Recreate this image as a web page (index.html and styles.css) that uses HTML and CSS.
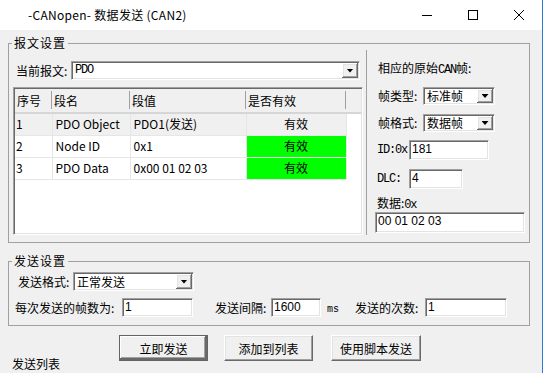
FILE: index.html
```html
<!DOCTYPE html>
<html lang="zh-CN">
<head>
    <meta charset="UTF-8">
    <title>-CANopen- 数据发送 (CAN2)</title>
    <link rel="stylesheet" href="styles.css">
</head>
<body>
    <div class="window">
        <div class="titlebar">
            <span class="title">-CANopen- 数据发送 (CAN2)</span>
            <div class="caption-btns">
                <span class="cap-btn">
                    <svg width="10" height="10" viewBox="0 0 10 10"><path d="M0 5.5H10" stroke="#000" stroke-width="1"/></svg>
                </span>
                <span class="cap-btn">
                    <svg width="10" height="10" viewBox="0 0 10 10"><rect x="0.5" y="0.5" width="9" height="9" fill="none" stroke="#000" stroke-width="1"/></svg>
                </span>
                <span class="cap-btn">
                    <svg width="10" height="10" viewBox="0 0 10 10"><path d="M0 0L10 10M10 0L0 10" stroke="#000" stroke-width="1"/></svg>
                </span>
            </div>
        </div>

        <!-- 报文设置 -->
        <fieldset class="group group-msg">
            <legend>报文设置</legend>
            <div class="msg-body">
                <div class="msg-left">
                    <div class="field-row">
                        <label class="lbl lbl-cur">当前报文:</label>
                        <div class="combo combo-cur">
                            <span class="combo-text mono">PDO</span>
                            <span class="combo-btn"><i class="arrow"></i></span>
                        </div>
                    </div>
                    <div class="listview">
                        <table class="grid">
                            <thead>
                                <tr>
                                    <th class="c-no">序号</th>
                                    <th class="c-name">段名</th>
                                    <th class="c-val">段值</th>
                                    <th class="c-ok">是否有效</th>
                                    <th class="c-fill"></th>
                                </tr>
                            </thead>
                            <tbody>
                                <tr class="row-sel">
                                    <td>1</td>
                                    <td>PDO Object</td>
                                    <td>PDO1(发送)</td>
                                    <td class="ok">有效</td>
                                    <td class="fill"></td>
                                </tr>
                                <tr>
                                    <td>2</td>
                                    <td>Node ID</td>
                                    <td>0x1</td>
                                    <td class="ok ok-on">有效</td>
                                    <td class="fill"></td>
                                </tr>
                                <tr>
                                    <td>3</td>
                                    <td>PDO Data</td>
                                    <td>0x00 01 02 03</td>
                                    <td class="ok ok-on">有效</td>
                                    <td class="fill"></td>
                                </tr>
                            </tbody>
                        </table>
                    </div>
                </div>

                <div class="msg-right">
                    <div class="raw-title">相应的原始<span class="mono">CAN</span>帧:</div>
                    <div class="field-row row-type">
                        <label class="lbl lbl-frame">帧类型:</label>
                        <div class="combo combo-frame">
                            <span class="combo-text">标准帧</span>
                            <span class="combo-btn"><i class="arrow"></i></span>
                        </div>
                    </div>
                    <div class="field-row row-fmt">
                        <label class="lbl lbl-frame">帧格式:</label>
                        <div class="combo combo-frame">
                            <span class="combo-text">数据帧</span>
                            <span class="combo-btn"><i class="arrow"></i></span>
                        </div>
                    </div>
                    <div class="field-row row-id">
                        <label class="lbl lbl-id mono">ID:0x</label>
                        <div class="edit edit-id">181</div>
                    </div>
                    <div class="field-row row-dlc">
                        <label class="lbl lbl-id mono">DLC:</label>
                        <div class="edit edit-dlc">4</div>
                    </div>
                    <div class="data-label">数据:<span class="mono">0x</span></div>
                    <div class="edit edit-data">00 01 02 03</div>
                </div>
            </div>
        </fieldset>

        <!-- 发送设置 -->
        <fieldset class="group group-send">
            <legend>发送设置</legend>
            <div class="send-body">
                <div class="field-row">
                    <label class="lbl lbl-mode">发送格式:</label>
                    <div class="combo combo-mode">
                        <span class="combo-text">正常发送</span>
                        <span class="combo-btn"><i class="arrow"></i></span>
                    </div>
                </div>
                <div class="field-row row-count">
                    <label class="lbl lbl-frames">每次发送的帧数为:</label>
                    <div class="edit edit-frames">1</div>
                    <label class="lbl lbl-gap">发送间隔:</label>
                    <div class="edit edit-gap">1600</div>
                    <span class="unit">ms</span>
                    <label class="lbl lbl-times">发送的次数:</label>
                    <div class="edit edit-times">1</div>
                </div>
            </div>
        </fieldset>

        <div class="actions">
            <button class="btn btn-default">立即发送</button>
            <button class="btn btn-add">添加到列表</button>
            <button class="btn btn-script">使用脚本发送</button>
        </div>

        <div class="list-title">发送列表</div>
    </div>
</body>
</html>
```

FILE: styles.css
```css
* {
    margin: 0;
    padding: 0;
    box-sizing: border-box;
}

body {
    width: 543px;
    height: 373px;
    overflow: hidden;
    background: #f0f0f0;
    font-family: "Noto Sans CJK SC", sans-serif;
    font-size: 12px;
    line-height: 14px;
    color: #000;
}

.mono {
    font-family: "Liberation Mono", monospace;
    font-size: 12px;
    letter-spacing: -1.2px;
}

.window {
    height: 373px;
    border-right: 1px solid #2b7bd3;
}

/* 标题栏 */
.titlebar {
    height: 30px;
    background: #fff;
    display: flex;
    align-items: center;
}

.title {
    flex: 1;
    padding-left: 28px;
    letter-spacing: 0.3px;
}

.caption-btns {
    display: flex;
    align-self: stretch;
}

.cap-btn {
    width: 46px;
    display: flex;
    align-items: center;
    justify-content: center;
}

/* 分组框 */
.group {
    margin-left: 8px;
    width: 522px;
    min-width: 0;
    border: 1px solid #a0a0a0;
    padding: 0;
}

.group legend {
    margin-left: 3px;
    padding: 0 2px;
    letter-spacing: 1px;
    line-height: 14px;
}

.group-msg {
    margin-top: 6px;
}

.msg-body {
    display: flex;
    padding: 0 0 7px 4px;
}

.msg-left {
    width: 350px;
    padding-top: 11px;
}

.msg-right {
    width: 163px;
    margin-left: 3px;
    border-left: 1px solid #a0a0a0;
    padding: 11px 0 0 11px;
}

.field-row {
    display: flex;
    align-items: center;
}

.lbl {
    flex: none;
    white-space: nowrap;
}

.lbl-cur {
    width: 55px;
    margin-left: 3px;
}

/* 下拉框 */
.combo {
    display: flex;
    height: 19px;
    padding: 1px;
    background: #fff;
    border: 1px solid;
    border-color: #a0a0a0 #fff #fff #a0a0a0;
    box-shadow: inset 1px 1px #696969, inset -1px -1px #e3e3e3;
}

.combo-text {
    flex: 1;
    padding-left: 2px;
    line-height: 15px;
    white-space: nowrap;
}

.combo-btn {
    width: 16px;
    display: flex;
    align-items: center;
    justify-content: center;
    background: #f0f0f0;
    box-shadow: inset -1px -1px #696969, inset 1px 1px #fff, inset -2px -2px #a0a0a0, inset 2px 2px #e3e3e3;
}

.arrow {
    width: 7px;
    height: 4px;
    background: #000;
    clip-path: polygon(0 0, 100% 0, 50% 100%);
}

.combo-cur {
    width: 289px;
}

/* 列表 */
.listview {
    width: 350px;
    height: 148px;
    margin-top: 7px;
    background: #fff;
    border: 1px solid;
    border-color: #a0a0a0 #fff #fff #a0a0a0;
    box-shadow: inset 1px 1px #696969, inset -1px -1px #e3e3e3;
    padding: 1px;
}

.grid {
    border-collapse: collapse;
    table-layout: fixed;
    width: 100%;
}

.grid th {
    height: 24px;
    font-weight: normal;
    text-align: left;
    padding-left: 2px;
    background: #f0f0f0;
    border-bottom: 2px solid #d6d6d6;
    position: relative;
}

.grid th::after {
    content: "";
    position: absolute;
    right: 0;
    top: 2px;
    bottom: 3px;
    width: 1px;
    background: #a0a0a0;
}

.grid th.c-fill::after {
    display: none;
}

.c-no { width: 37px; }
.c-name { width: 78px; }
.c-val { width: 116px; }
.c-ok { width: 100px; }

.grid td {
    height: 22px;
    padding-left: 3px;
    border-right: 1px solid #e6e6e6;
    border-bottom: 1px solid #e6e6e6;
    white-space: nowrap;
}

.grid td:first-child {
    padding-left: 1px;
}

.row-sel td {
    background: #f0f0f0;
}

.grid td.ok {
    text-align: center;
    padding-left: 0;
}

.grid td.ok-on {
    background: #00ff00;
}

.grid td.fill {
    border: none;
    background: #fff;
}

/* 右侧原始帧 */
.raw-title {
    height: 14px;
}

.row-type {
    margin-top: 12px;
}

.row-fmt {
    margin-top: 9px;
}

.lbl-frame {
    width: 45px;
}

.combo-frame {
    width: 72px;
    height: 18px;
}

.combo-frame .combo-text {
    line-height: 14px;
}

.edit {
    height: 20px;
    padding: 1px 2px;
    background: #fff;
    border: 1px solid;
    border-color: #a0a0a0 #fff #fff #a0a0a0;
    box-shadow: inset 1px 1px #696969, inset -1px -1px #e3e3e3;
    font-family: "Liberation Sans", sans-serif;
    line-height: 15px;
    white-space: nowrap;
}

.row-id {
    margin-top: 8px;
}

.row-dlc {
    margin-top: 9px;
}

.lbl-id {
    width: 32px;
    margin-left: -1px;
}

.edit-id {
    width: 80px;
}

.edit-dlc {
    width: 54px;
}

.data-label {
    margin: 7px 0 0 -1px;
}

.edit-data {
    width: 150px;
    height: 21px;
    margin-left: -3px;
}

/* 发送设置 */
.group-send {
    margin-top: 11px;
}

.send-body {
    padding: 4px 0 8px 0;
}

.lbl-mode {
    width: 55px;
    margin-left: 9px;
}

.combo-mode {
    width: 121px;
}

.row-count {
    margin-top: 7px;
}

.row-count .edit {
    height: 19px;
}

.lbl-frames {
    width: 107px;
    margin-left: 6px;
}

.edit-frames {
    width: 71px;
}

.lbl-gap {
    width: 56px;
    margin-left: 22px;
}

.edit-gap {
    width: 50px;
}

.unit {
    width: 34px;
    padding: 4px 0 0 6px;
    font-family: "Liberation Mono", monospace;
    font-size: 10px;
}

.lbl-times {
    width: 70px;
}

.edit-times {
    width: 82px;
}

/* 按钮 */
.actions {
    display: flex;
    padding-left: 119px;
    margin-top: 9px;
}

.btn {
    width: 89px;
    height: 26px;
    font-family: inherit;
    font-size: 12px;
    color: #000;
    background: #f0f0f0;
    border: 1px solid;
    border-color: #fff #696969 #696969 #fff;
    box-shadow: inset -1px -1px #a0a0a0, inset 1px 1px #e3e3e3;
}

.btn-default {
    border: 1px solid #646464;
    box-shadow: inset -2px -2px #696969, inset 1px 1px #fff, inset -3px -3px #a0a0a0;
}

.btn-add {
    margin-left: 16px;
}

.btn-script {
    width: 90px;
    margin-left: 18px;
}

.list-title {
    margin: -4px 0 0 12px;
}
```
